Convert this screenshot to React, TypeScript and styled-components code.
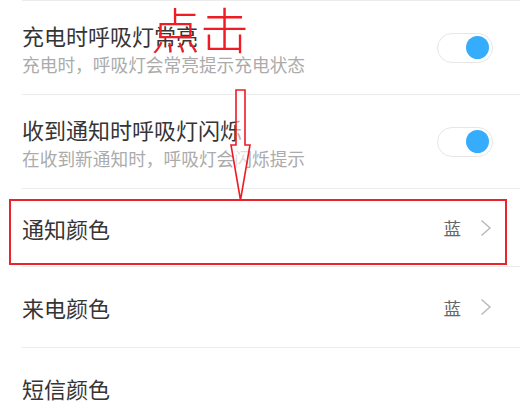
import React from 'react';
import styled, { createGlobalStyle, css } from 'styled-components';

const GlobalStyle = createGlobalStyle`
  html, body {
    margin: 0;
    padding: 0;
    background: #ffffff;
    overflow: hidden;
  }
  body {
    font-family: "Noto Sans CJK SC", "Noto Sans", sans-serif;
  }
`;

const Page = styled.div`
  position: relative;
  width: 520px;
  height: 409px;
  overflow: hidden;
  background: #ffffff;
`;

const List = styled.div`
  display: flex;
  flex-direction: column;
  margin-left: 22px;
  border-top: 1px solid #ececec;
`;

const Row = styled.div<{ height: number; highlighted?: boolean }>`
  position: relative;
  display: flex;
  align-items: center;
  justify-content: space-between;
  height: ${({ height }) => height}px;
  padding-right: 27px;
  border-bottom: 1px solid #ececec;
  ${({ highlighted }) =>
    highlighted &&
    css`
      &::after {
        content: '';
        position: absolute;
        top: 10px;
        left: -13px;
        right: 13px;
        height: 62px;
        border: 2px solid #e8242c;
        pointer-events: none;
      }
    `}
`;

const TextBlock = styled.div`
  display: flex;
  flex-direction: column;
  gap: 6px;
`;

const Title = styled.div`
  font-size: 22px;
  line-height: 26px;
  color: #353535;
`;

const Subtitle = styled.div`
  font-size: 17.7px;
  line-height: 20px;
  color: #ababab;
`;

const Toggle = styled.div<{ on?: boolean }>`
  position: relative;
  box-sizing: border-box;
  width: 56px;
  height: 30px;
  border-radius: 15px;
  border: 1.5px solid #e6e6e6;
  background: #ffffff;
  &::after {
    content: '';
    position: absolute;
    top: 2.5px;
    ${({ on }) => (on ? 'right: 3px;' : 'left: 3px;')}
    width: 23px;
    height: 23px;
    border-radius: 50%;
    background: ${({ on }) => (on ? '#35acfc' : '#dddddd')};
  }
`;

const Value = styled.div`
  display: flex;
  align-items: center;
  gap: 19px;
  margin-right: 1px;
  font-size: 17.5px;
  color: #666666;
`;

const Chevron = styled.svg`
  width: 12px;
  height: 18px;
  display: block;
`;

const Annotation = styled.div`
  position: absolute;
  left: 151px;
  top: 3px;
  font-size: 49px;
  line-height: 1;
  font-weight: 300;
  color: #ee1c25;
  pointer-events: none;
`;

const Arrow = styled.svg`
  position: absolute;
  left: 228px;
  top: 88px;
  width: 26px;
  height: 114px;
  pointer-events: none;
`;

const ChevronIcon = () => (
  <Chevron viewBox="0 0 12 18">
    <path d="M1.5 1.5 L10 9 L1.5 16.5" fill="none" stroke="#b8b8b8" strokeWidth="1.4" />
  </Chevron>
);

type Item = {
  title: string;
  sub?: string;
  toggle?: boolean;
  value?: string;
  height: number;
  highlighted?: boolean;
};

const rows: Item[] = [
  { title: '充电时呼吸灯常亮', sub: '充电时，呼吸灯会常亮提示充电状态', toggle: true, height: 93 },
  { title: '收到通知时呼吸灯闪烁', sub: '在收到新通知时，呼吸灯会闪烁提示', toggle: true, height: 93 },
  { title: '通知颜色', value: '蓝', height: 77, highlighted: true },
  { title: '来电颜色', value: '蓝', height: 80 },
  { title: '短信颜色', height: 80 },
];

export default function App() {
  return (
    <Page>
      <GlobalStyle />
      <List>
        {rows.map((r) => (
          <Row key={r.title} height={r.height} highlighted={r.highlighted}>
            <TextBlock>
              <Title>{r.title}</Title>
              {r.sub && <Subtitle>{r.sub}</Subtitle>}
            </TextBlock>
            {r.toggle && <Toggle on />}
            {r.value && (
              <Value>
                {r.value}
                <ChevronIcon />
              </Value>
            )}
          </Row>
        ))}
      </List>
      <Annotation>点击</Annotation>
      <Arrow viewBox="0 0 26 114">
        <path
          d="M8 2 L17 2 L17 57 L22 57 L12.5 112 L3 57 L8 57 Z"
          fill="#ffffff"
          fillOpacity="0.6"
          stroke="#ee1c25"
          strokeWidth="1.6"
        />
      </Arrow>
    </Page>
  );
}
